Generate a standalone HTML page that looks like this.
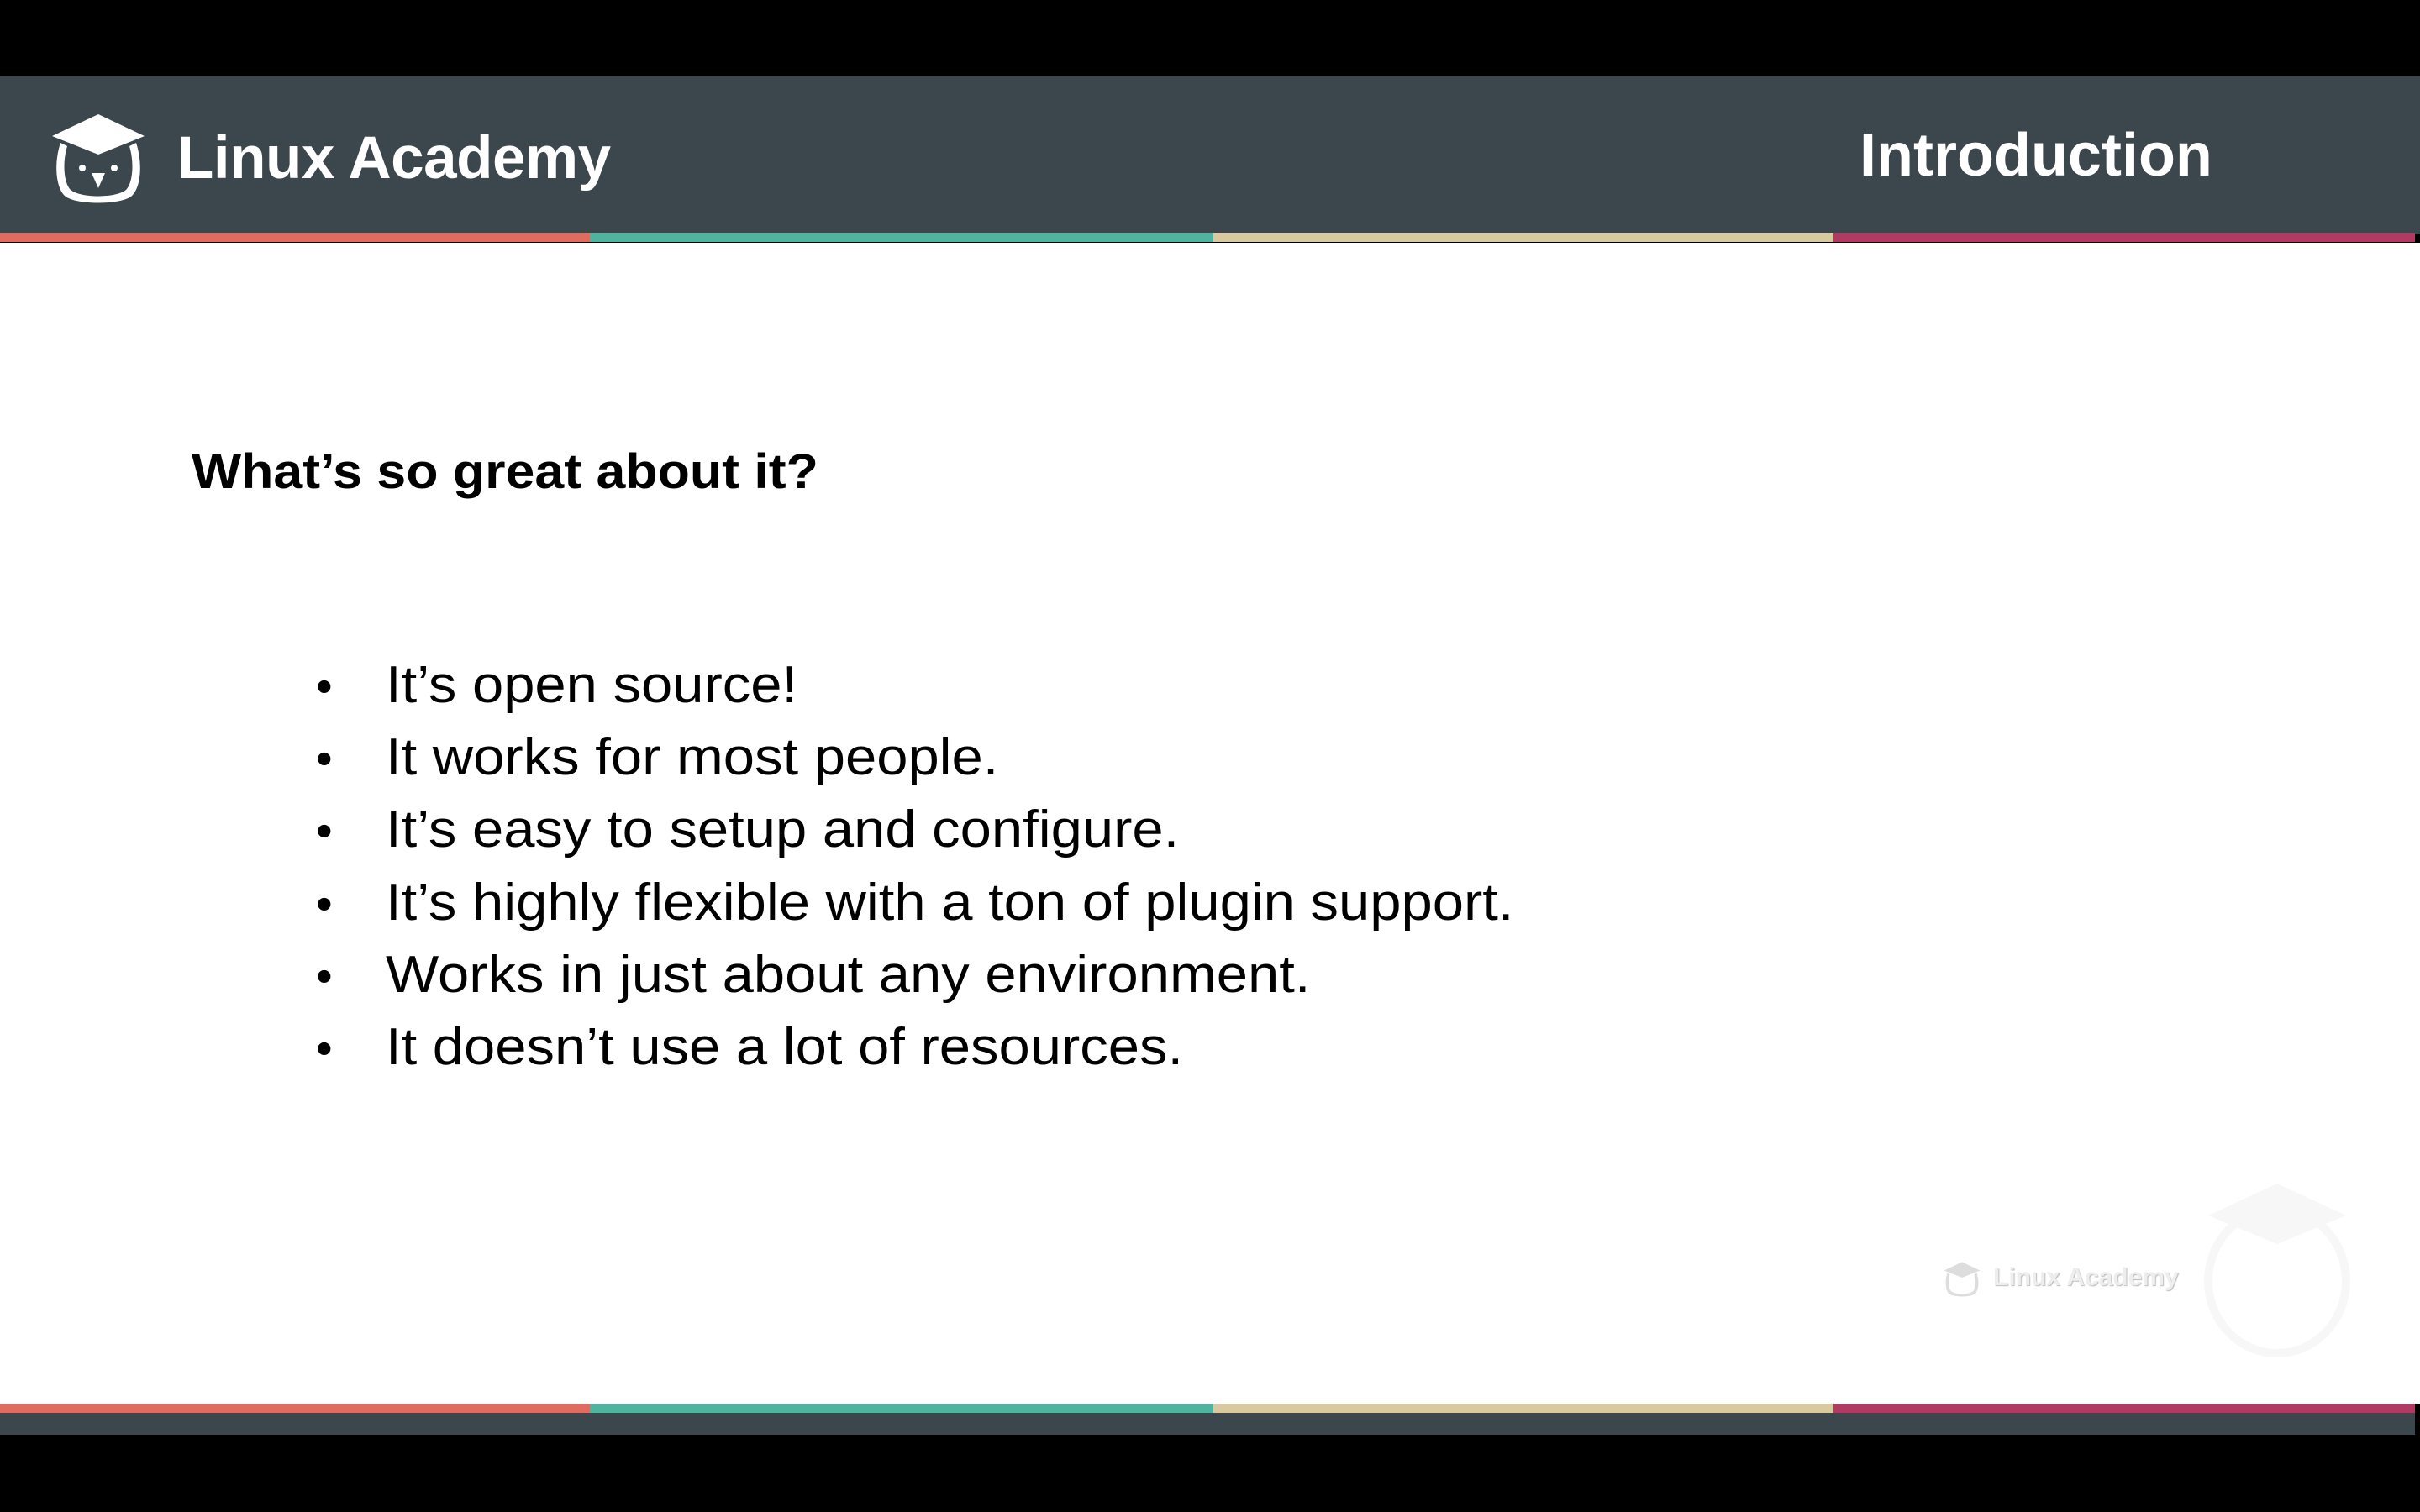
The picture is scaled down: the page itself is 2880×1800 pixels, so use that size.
<!DOCTYPE html>
<html><head><meta charset="utf-8"><style>
*{margin:0;padding:0;box-sizing:border-box}
body{width:2880px;height:1800px;background:#000;position:relative;overflow:hidden;font-family:"Liberation Sans",sans-serif}
.abs{position:absolute}
.header{left:0;top:90px;width:2880px;height:188px;background:#3c464d}
.stripe{height:11px;display:flex;width:2874px;left:0}
.stripe div{height:100%}
.white{left:0;top:289px;width:2880px;height:1382px;background:#fff}
.foot{left:0;top:1682px;width:2874px;height:26px;background:#3c464d}
.logo-t{left:211px;top:148px;color:#fff;font-weight:bold;font-size:71px;letter-spacing:-0.5px}
.intro{left:2213px;top:144px;color:#fff;font-weight:bold;font-size:72px}
h1{position:absolute;left:228px;top:528px;font-size:58px;font-weight:bold;color:#000;white-space:nowrap;transform:scaleX(1.08);transform-origin:left}
ul{position:absolute;left:0;top:0;list-style:none}
li{position:absolute;left:0;white-space:nowrap;font-size:62px;color:#000}
li .b{position:absolute;left:376px;top:4px;font-size:56px}
li .t{position:absolute;left:459px;display:inline-block;transform:scaleX(1.08);transform-origin:left}
</style></head><body>
<div class="abs header"></div>
<div class="abs stripe" style="top:277px"><div style="width:702px;background:#e06b5f"></div><div style="width:742px;background:#4fb3a0"></div><div style="width:738px;background:#d9c9a0"></div><div style="width:692px;background:#b03a62"></div></div>
<div class="abs white"></div>
<div class="abs stripe" style="top:1671px"><div style="width:702px;background:#e06b5f"></div><div style="width:742px;background:#4fb3a0"></div><div style="width:738px;background:#d9c9a0"></div><div style="width:692px;background:#b03a62"></div></div>
<div class="abs foot"></div>

<svg class="abs" style="left:58px;top:134px" width="118" height="110" viewBox="0 0 118 110">
<polygon points="59,2 114,28 59,50 4,28" fill="#fff"/>
<path d="M14,36 C6,60 8,90 20,100 C34,110 84,110 98,100 C110,90 112,60 104,36 L96,40 C102,60 100,84 92,92 C80,102 38,102 26,92 C18,84 16,60 22,40 Z" fill="#fff"/>
<circle cx="40" cy="66" r="4" fill="#fff"/><circle cx="78" cy="66" r="4" fill="#fff"/>
<polygon points="51,72 67,72 59,90" fill="#fff"/>
</svg>
<div class="abs logo-t">Linux Academy</div>
<div class="abs intro">Introduction</div>

<h1>What’s so great about it?</h1>
<ul>
<li style="top:780px"><span class="b">•</span><span class="t">It’s open source!</span></li>
<li style="top:866px"><span class="b">•</span><span class="t">It works for most people.</span></li>
<li style="top:952px"><span class="b">•</span><span class="t">It’s easy to setup and configure.</span></li>
<li style="top:1039px"><span class="b">•</span><span class="t">It’s highly flexible with a ton of plugin support.</span></li>
<li style="top:1125px"><span class="b">•</span><span class="t">Works in just about any environment.</span></li>
<li style="top:1211px"><span class="b">•</span><span class="t">It doesn’t use a lot of resources.</span></li>
</ul>

<svg class="abs" style="left:2312px;top:1500px" width="46" height="46" viewBox="0 0 118 110"><polygon points="59,2 114,28 59,50 4,28" fill="#ddd"/><path d="M14,36 C6,60 8,90 20,100 C34,110 84,110 98,100 C110,90 112,60 104,36 L96,40 C102,60 100,84 92,92 C80,102 38,102 26,92 C18,84 16,60 22,40 Z" fill="#ddd"/></svg>
<div class="abs" style="left:2372px;top:1504px;font-size:30px;font-weight:bold;color:#eee;text-shadow:1px 1px 1px #bbb">Linux Academy</div>
<svg class="abs" style="left:2620px;top:1405px" width="180" height="210" viewBox="0 0 180 210"><polygon points="90,4 172,42 90,76 8,42" fill="#f7f7f7"/><ellipse cx="90" cy="120" rx="82" ry="86" fill="none" stroke="#f7f7f7" stroke-width="10"/></svg>
</body></html>
